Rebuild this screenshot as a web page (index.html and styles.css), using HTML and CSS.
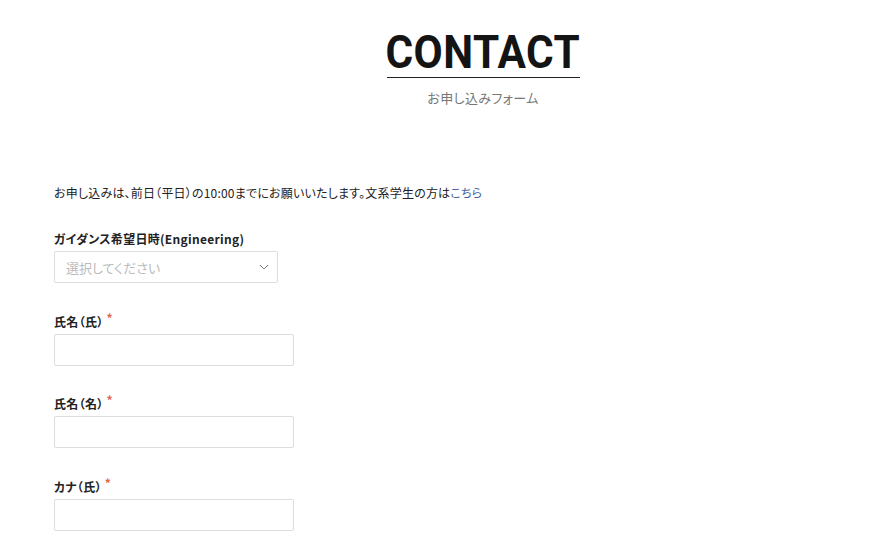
FILE: index.html
```html
<!DOCTYPE html>
<html lang="ja">
<head>
<meta charset="utf-8">
<link rel="stylesheet" href="styles.css">
</head>
<body>
<header class="head">
  <h1 class="title"><span class="title-text">CONTACT</span></h1>
  <p class="subtitle">お申し込みフォーム</p>
</header>
<main class="form">
  <p class="intro">お申し込みは、前日（平日）の10:00までにお願いいたします。文系学生の方は<a href="#" class="link">こちら</a></p>
  <div class="field">
    <label class="label">ガイダンス希望日時(Engineering)</label>
    <div class="select">
      <span class="placeholder">選択してください</span>
      <svg class="chev" width="10" height="6" viewBox="0 0 10 6"><path d="M1 1l4 4 4-4" fill="none" stroke="#777" stroke-width="1"/></svg>
    </div>
  </div>
  <div class="field">
    <label class="label">氏名（氏）<span class="req">*</span></label>
    <div class="input"></div>
  </div>
  <div class="field">
    <label class="label">氏名（名）<span class="req">*</span></label>
    <div class="input"></div>
  </div>
  <div class="field">
    <label class="label">カナ（氏）<span class="req">*</span></label>
    <div class="input"></div>
  </div>
</main>
</body>
</html>
```
FILE: styles.css
```css
html, body { margin: 0; padding: 0; background: #fff; }
body {
  font-family: "Noto Sans CJK JP", "Noto Sans", sans-serif;
  font-feature-settings: "palt";
  color: #222;
  width: 893px;
  height: 544px;
  overflow: hidden;
}
.head {
  display: flex;
  flex-direction: column;
  align-items: center;
  padding: 28px 0 0 73px;
}
.title {
  margin: 0;
  font-family: Roboto, "Liberation Sans", sans-serif;
  font-weight: 700;
  font-size: 46px;
  line-height: 48px;
  color: #141414;
  border-bottom: 1px solid #222;
  height: 49px;
  display: flex;
  justify-content: center;
  width: 193px;
}
.title-text {
  display: inline-block;
  transform: scaleX(0.92);
  letter-spacing: 0.5px;
  white-space: nowrap;
}
.subtitle {
  margin: 11px 0 0;
  font-size: 13px;
  line-height: 18px;
  letter-spacing: 0.4px;
  color: #777;
}
.form {
  padding: 77px 0 0 54px;
}
.intro {
  margin: 0;
  font-size: 12px;
  line-height: 18px;
  letter-spacing: 0.2px;
  color: #222;
}
.link { color: #4163a0; text-decoration: none; }
.field {
  margin-top: 29.5px;
  display: flex;
  flex-direction: column;
}
.intro + .field { margin-top: 28px; }
.label {
  font-size: 12px;
  font-weight: 700;
  line-height: 18px;
  letter-spacing: 0.3px;
  color: #222;
  margin-bottom: 3px;
}
.req {
  color: #e0664b;
  font-size: 12px;
  margin-left: 3px;
  line-height: 0;
  vertical-align: 4px;
}
.select {
  height: 30px;
  border: 1px solid #ddd;
  border-radius: 2px;
  display: flex;
  align-items: center;
  justify-content: space-between;
  padding: 0 8px 0 11px;
  width: 203px;
}
.placeholder {
  font-size: 13px;
  color: #bbb;
}
.chev { display: block; }
.input {
  width: 238px;
  height: 30px;
  border: 1px solid #ddd;
  border-radius: 2px;
}
```
